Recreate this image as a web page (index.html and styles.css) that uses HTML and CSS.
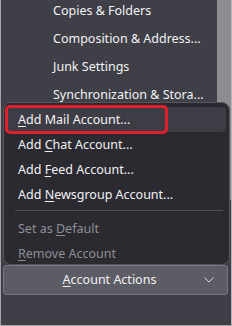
FILE: index.html
```html
<!DOCTYPE html>
<html>
<head>
<meta charset="utf-8">
<link rel="stylesheet" href="styles.css">
</head>
<body>
<div class="window">
  <div class="top">
    <ul class="tree">
      <li>Copies &amp; Folders</li>
      <li>Composition &amp; Address...</li>
      <li>Junk Settings</li>
      <li>Synchronization &amp; Stora...</li>
    </ul>
    <div class="scrollbar"></div>
  </div>
  <button class="actions"><span class="label"><u>A</u>ccount Actions</span>
    <svg class="chev" width="10" height="6" viewBox="0 0 10 6"><path d="M0.5 0.5 L5 5 L9.5 0.5" fill="none" stroke="#d8d8dc" stroke-width="1"/></svg>
  </button>
  <div class="bottom"></div>
  <div class="menu">
    <div class="item active"><u>A</u>dd Mail Account...</div>
    <div class="item">Add <u>C</u>hat Account...</div>
    <div class="item">Add <u>F</u>eed Account...</div>
    <div class="item">Add <u>N</u>ewsgroup Account...</div>
    <div class="sep"></div>
    <div class="item disabled">Set as <u>D</u>efault</div>
    <div class="item disabled"><u>R</u>emove Account</div>
    <div class="redbox"></div>
  </div>
</div>
</body>
</html>
```
FILE: styles.css
```css
html, body { margin: 0; padding: 0; }
body {
  width: 232px; height: 326px; overflow: hidden;
  font-family: "Noto Sans", "Open Sans", sans-serif;
  font-size: 12.5px;
  background: #a4a4a8;
}
.window {
  position: relative;
  display: flex; flex-direction: column;
  width: 231px; height: 325px;
  margin-left: 1px;
  border-right: 1px solid #b4b4b8;
  box-sizing: border-box;
  background: #3f3f47;
}
.top {
  display: flex;
  height: 200px;
  flex: 0 0 200px;
  background: linear-gradient(to right, #3f3f47 0, #3f3f47 216px, #8c8c91 216px, #8c8c91 100%);
}
.tree { flex: 1 1 auto; min-width: 0; list-style: none; margin: 0; padding: 0; overflow: hidden; }
.scrollbar { flex: 0 0 13px; width: 13px; background-color: #8c8c91; }
.tree li {
  color: #f2f2f4;
  height: 28px; line-height: 22px;
  padding-left: 52px;
  white-space: nowrap;
}
.actions {
  margin: 65px 3px 0 2px;
  height: 30px;
  background: #5c5c64;
  border: 1px solid #76767e;
  border-radius: 3px;
  color: #f2f2f4;
  font: inherit;
  position: relative;
  display: flex; align-items: center; justify-content: center;
  padding: 0 12px 1px 0;
}
.actions u { text-decoration-thickness: 1px; text-underline-offset: 2px; }
.chev { position: absolute; right: 13px; top: 11px; }
.bottom { flex: 1; }
.menu {
  position: absolute;
  left: 2px; top: 102px;
  width: 227px; height: 163px;
  box-sizing: border-box;
  background: #2b2a31;
  border: 1px solid #56565c;
  border-radius: 8px;
  padding: 4px 3px;
}
.item {
  height: 25px; line-height: 25px;
  padding-left: 11px;
  color: #f2f2f4;
  border-radius: 4px;
  white-space: nowrap;
}
.item u { text-underline-offset: 2px; text-decoration-thickness: 1px; }
.item.active { background: #3e3d45; }
.item.disabled { color: #8e8e94; }
.sep { height: 1px; background: #4d4d53; margin: 3px 3px 5px 8px; }
.redbox {
  position: absolute;
  left: 1px; top: 2px;
  width: 163px; height: 29px;
  box-sizing: border-box;
  border: 3px solid #e0212b;
  border-radius: 5px;
}
```
